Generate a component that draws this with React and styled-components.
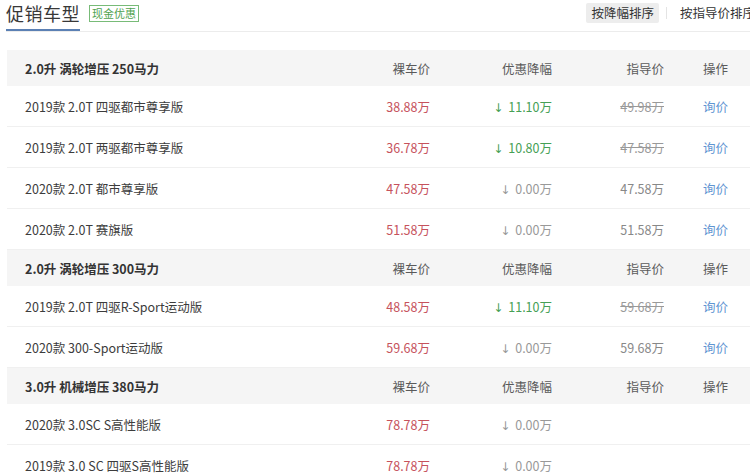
import React from "react";
import styled, { createGlobalStyle } from "styled-components";

const Global = createGlobalStyle`
  html, body { margin: 0; padding: 0; background: #fff; overflow: hidden; }
  body { font-family: "Noto Sans CJK SC", "Noto Sans", sans-serif; color: #333; }
`;

const Page = styled.div`
  width: 760px;
  padding: 0 0 0 6px;
  box-sizing: border-box;
`;

const TopBar = styled.div`
  display: flex;
  align-items: flex-start;
  height: 32px;
  border-bottom: 1px solid #ececec;
  box-sizing: border-box;
`;

const Title = styled.div`
  font-size: 18px;
  line-height: 24px;
  color: #383838;
  padding-top: 1px;
  height: 31px;
  box-sizing: border-box;
  border-bottom: 2px solid #5b80b4;
  letter-spacing: 0.5px;
`;

const Tag = styled.span`
  margin: 5px 0 0 9px;
  height: 17px;
  line-height: 15px;
  padding: 0 2px;
  font-size: 11px;
  color: #4fa24f;
  border: 1px solid #78bb78;
  box-sizing: border-box;
`;

const SortGroup = styled.div`
  margin-left: auto;
  display: flex;
  align-items: center;
  padding-top: 3px;
`;

const SortButton = styled.div`
  height: 20px;
  line-height: 20px;
  font-size: 12.5px;
  padding: 0 5px;
  border-radius: 2px;
  color: #333;
  background: ${(p) => (p.$active ? "#ededed" : "transparent")};
  white-space: nowrap;
`;

const Sep = styled.span`
  width: 1px;
  height: 12px;
  background: #e4e4e4;
  margin: 0 8px 0 7px;
`;

const Table = styled.div`
  margin-top: 18px;
  margin-left: 1px;
  width: 750px;
`;

const Row = styled.div`
  display: grid;
  grid-template-columns: 323px 100px 122px 112px 93px;
  align-items: center;
  height: ${(p) => (p.$head ? "36px" : "41px")};
  background: ${(p) => (p.$head ? "#f5f5f5" : "#fff")};
  border-bottom: ${(p) => (p.$head ? "none" : "1px solid #f0f0f0")};
  box-sizing: border-box;
  font-size: 12.5px;
`;

const Name = styled.div`
  padding-left: 18px;
  color: ${(p) => (p.$head ? "#333" : "#3c3c3c")};
  font-weight: ${(p) => (p.$head ? 700 : 400)};
  white-space: nowrap;
`;

const Cell = styled.div`
  text-align: right;
  white-space: nowrap;
  color: ${(p) => p.$color || "#5a5a5a"};
  text-decoration: ${(p) => (p.$strike ? "line-through" : "none")};
`;

const Action = styled.div`
  padding-left: 39px;
  color: ${(p) => (p.$head ? "#5a5a5a" : "#5f95d2")};
  white-space: nowrap;
`;

const Arrow = styled.span`
  margin-right: 5px;
  font-family: "DejaVu Sans", sans-serif;
  font-size: 12px;
`;

const groups = [
  {
    title: "2.0升 涡轮增压 250马力",
    rows: [
      ["2019款 2.0T 四驱都市尊享版", "38.88万", "11.10", "49.98万", true],
      ["2019款 2.0T 两驱都市尊享版", "36.78万", "10.80", "47.58万", true],
      ["2020款 2.0T 都市尊享版", "47.58万", "0.00", "47.58万", true],
      ["2020款 2.0T 赛旗版", "51.58万", "0.00", "51.58万", true],
    ],
  },
  {
    title: "2.0升 涡轮增压 300马力",
    rows: [
      ["2019款 2.0T 四驱R-Sport运动版", "48.58万", "11.10", "59.68万", true],
      ["2020款 300-Sport运动版", "59.68万", "0.00", "59.68万", true],
    ],
  },
  {
    title: "3.0升 机械增压 380马力",
    rows: [
      ["2020款 3.0SC S高性能版", "78.78万", "0.00", "", false],
      ["2019款 3.0 SC 四驱S高性能版", "78.78万", "0.00", "", false],
    ],
  },
];

export default function App() {
  return (
    <Page>
      <Global />
      <TopBar>
        <Title>促销车型</Title>
        <Tag>现金优惠</Tag>
        <SortGroup>
          <SortButton $active>按降幅排序</SortButton>
          <Sep />
          <SortButton>按指导价排序</SortButton>
        </SortGroup>
      </TopBar>
      <Table>
        {groups.map((g) => (
          <React.Fragment key={g.title}>
            <Row $head>
              <Name $head>{g.title}</Name>
              <Cell>裸车价</Cell>
              <Cell>优惠降幅</Cell>
              <Cell>指导价</Cell>
              <Action $head>操作</Action>
            </Row>
            {g.rows.map(([name, price, cut, guide, ask]) => {
              const has = cut !== "0.00";
              return (
                <Row key={name}>
                  <Name>{name}</Name>
                  <Cell $color="#c6525c">{price}</Cell>
                  <Cell $color={has ? "#46a055" : "#999"}>
                    <Arrow>↓</Arrow>
                    {cut}万
                  </Cell>
                  <Cell $color={has ? "#999" : "#888"} $strike={has}>
                    {guide}
                  </Cell>
                  <Action>{ask ? "询价" : ""}</Action>
                </Row>
              );
            })}
          </React.Fragment>
        ))}
      </Table>
    </Page>
  );
}
